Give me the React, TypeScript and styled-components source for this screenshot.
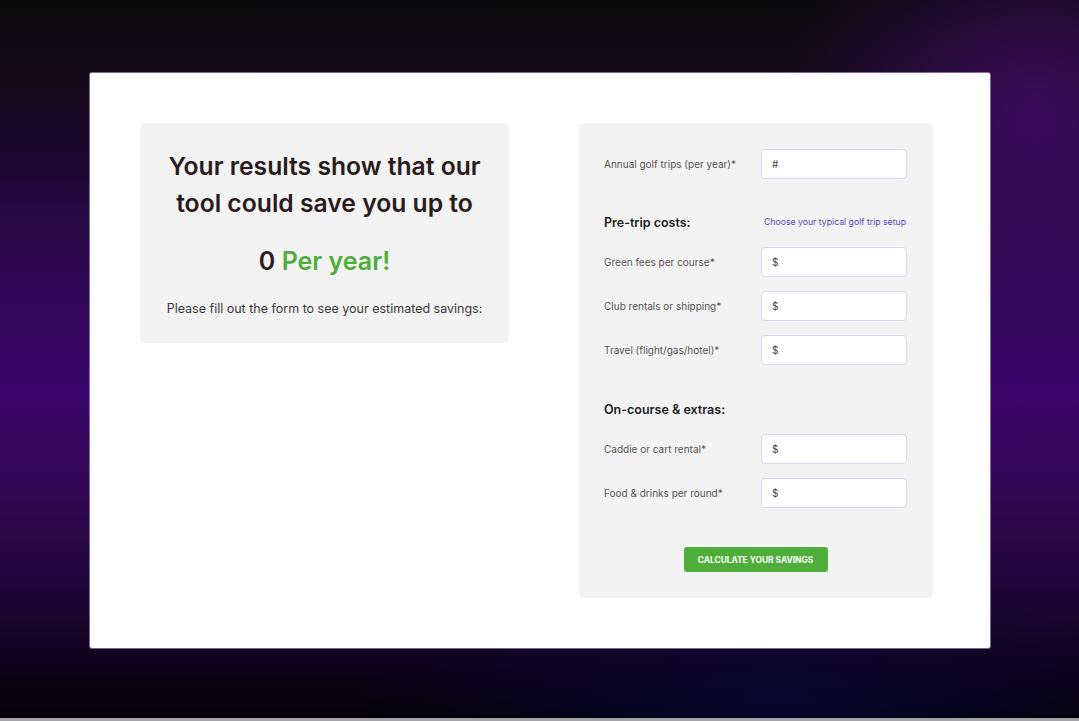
import { createGlobalStyle } from 'styled-components';
import styled from 'styled-components';

const GlobalStyle = createGlobalStyle`
  html, body {
    margin: 0;
    padding: 0;
  }
  body {
    font-family: Inter, "Noto Sans", Arial, sans-serif;
    background: #050308;
  }
  * {
    box-sizing: border-box;
  }
`;

const Page = styled.div`
  height: 721px;
  padding: 73px 89px 0 90px;
  border-bottom: 3px solid #a3a3a6;
  background:
    radial-gradient(ellipse 260px 220px at 96% 16%, rgba(72, 12, 112, 0.75), transparent 100%),
    radial-gradient(ellipse 420px 120px at 72% 98%, rgba(10, 6, 60, 0.7), transparent 100%),
    linear-gradient(
      180deg,
      #0a0a0a 0%,
      #110a16 10%,
      #1d0830 22%,
      #2e0852 38%,
      #3d066c 55%,
      #30074f 70%,
      #1c0534 84%,
      #0c0318 93%,
      #030206 100%
    );
`;

const Card = styled.main`
  width: 900px;
  height: 575px;
  background: #ffffff;
  border-radius: 2px;
  box-shadow: 0 0 0 1px rgba(190, 170, 220, 0.6);
  display: flex;
  align-items: flex-start;
  gap: 70px;
  padding: 50px 0 0 50px;
`;

const ResultPanel = styled.section`
  width: 369px;
  background: #f3f3f3;
  border-radius: 6px;
  padding: 25px 16px 25px;
  text-align: center;
`;

const Headline = styled.h1`
  margin: 0;
  font-size: 24.7px;
  line-height: 37px;
  font-weight: 600;
  color: #2a1b1c;
`;

const Amount = styled.p`
  margin: 21px 0 0;
  font-size: 25px;
  line-height: 37px;
  font-weight: 600;
  color: #2a1b1c;
`;

const Green = styled.span`
  color: #4fae3a;
`;

const Hint = styled.p`
  margin: 20px 0 0;
  font-size: 12.5px;
  line-height: 18px;
  color: #3a3a3a;
`;

const FormPanel = styled.form`
  width: 354px;
  background: #f3f3f3;
  border-radius: 6px;
  padding: 26px 26px 26px 25px;
  display: flex;
  flex-direction: column;
`;

const Row = styled.label`
  display: grid;
  grid-template-columns: 157px 146px;
  align-items: center;
  margin-top: ${({ $first }: { $first?: boolean }) => ($first ? '0' : '14px')};
`;

const Label = styled.span`
  font-size: 10px;
  color: #555555;
`;

const Input = styled.input`
  height: 30px;
  width: 146px;
  border: 1px solid #dcd4f2;
  border-radius: 4px;
  background: #ffffff;
  padding: 0 10px;
  font-family: inherit;
  font-size: 10px;
  color: #444;
  outline: none;
  &::placeholder {
    color: #444;
  }
`;

const SectionHead = styled.div`
  display: flex;
  align-items: center;
  justify-content: space-between;
  height: 16px;
  margin-top: ${({ $top }: { $top: number }) => $top}px;
  margin-bottom: 3px;
`;

const SectionTitle = styled.h2`
  margin: 0;
  font-size: 12.5px;
  font-weight: 600;
  color: #1d1d1d;
`;

const SetupLink = styled.a`
  font-size: 8.7px;
  color: #5a3fc4;
  text-decoration: none;
  padding-right: 1px;
`;

const Actions = styled.div`
  display: flex;
  justify-content: center;
  margin-top: 39px;
`;

const Button = styled.button`
  width: 144px;
  height: 25px;
  border: none;
  border-radius: 3px;
  background: #4fae3a;
  color: #ffffff;
  font-family: inherit;
  font-size: 8.4px;
  font-weight: 700;
  text-transform: uppercase;
`;

const preTrip = ['Green fees per course*', 'Club rentals or shipping*', 'Travel (flight/gas/hotel)*'];
const extras = ['Caddie or cart rental*', 'Food & drinks per round*'];

export default function App() {
  return (
    <>
      <GlobalStyle />
      <Page>
        <Card>
          <ResultPanel>
            <Headline>
              Your results show that our
              <br />
              tool could save you up to
            </Headline>
            <Amount>
              0 <Green>Per year!</Green>
            </Amount>
            <Hint>Please fill out the form to see your estimated savings:</Hint>
          </ResultPanel>

          <FormPanel onSubmit={(e) => e.preventDefault()}>
            <Row $first>
              <Label>Annual golf trips (per year)*</Label>
              <Input placeholder="#" />
            </Row>

            <SectionHead $top={35}>
              <SectionTitle>Pre-trip costs:</SectionTitle>
              <SetupLink href="#">Choose your typical golf trip setup</SetupLink>
            </SectionHead>
            {preTrip.map((label) => (
              <Row key={label}>
                <Label>{label}</Label>
                <Input placeholder="$" />
              </Row>
            ))}

            <SectionHead $top={36}>
              <SectionTitle>On-course &amp; extras:</SectionTitle>
            </SectionHead>
            {extras.map((label) => (
              <Row key={label}>
                <Label>{label}</Label>
                <Input placeholder="$" />
              </Row>
            ))}

            <Actions>
              <Button type="submit">Calculate your savings</Button>
            </Actions>
          </FormPanel>
        </Card>
      </Page>
    </>
  );
}
